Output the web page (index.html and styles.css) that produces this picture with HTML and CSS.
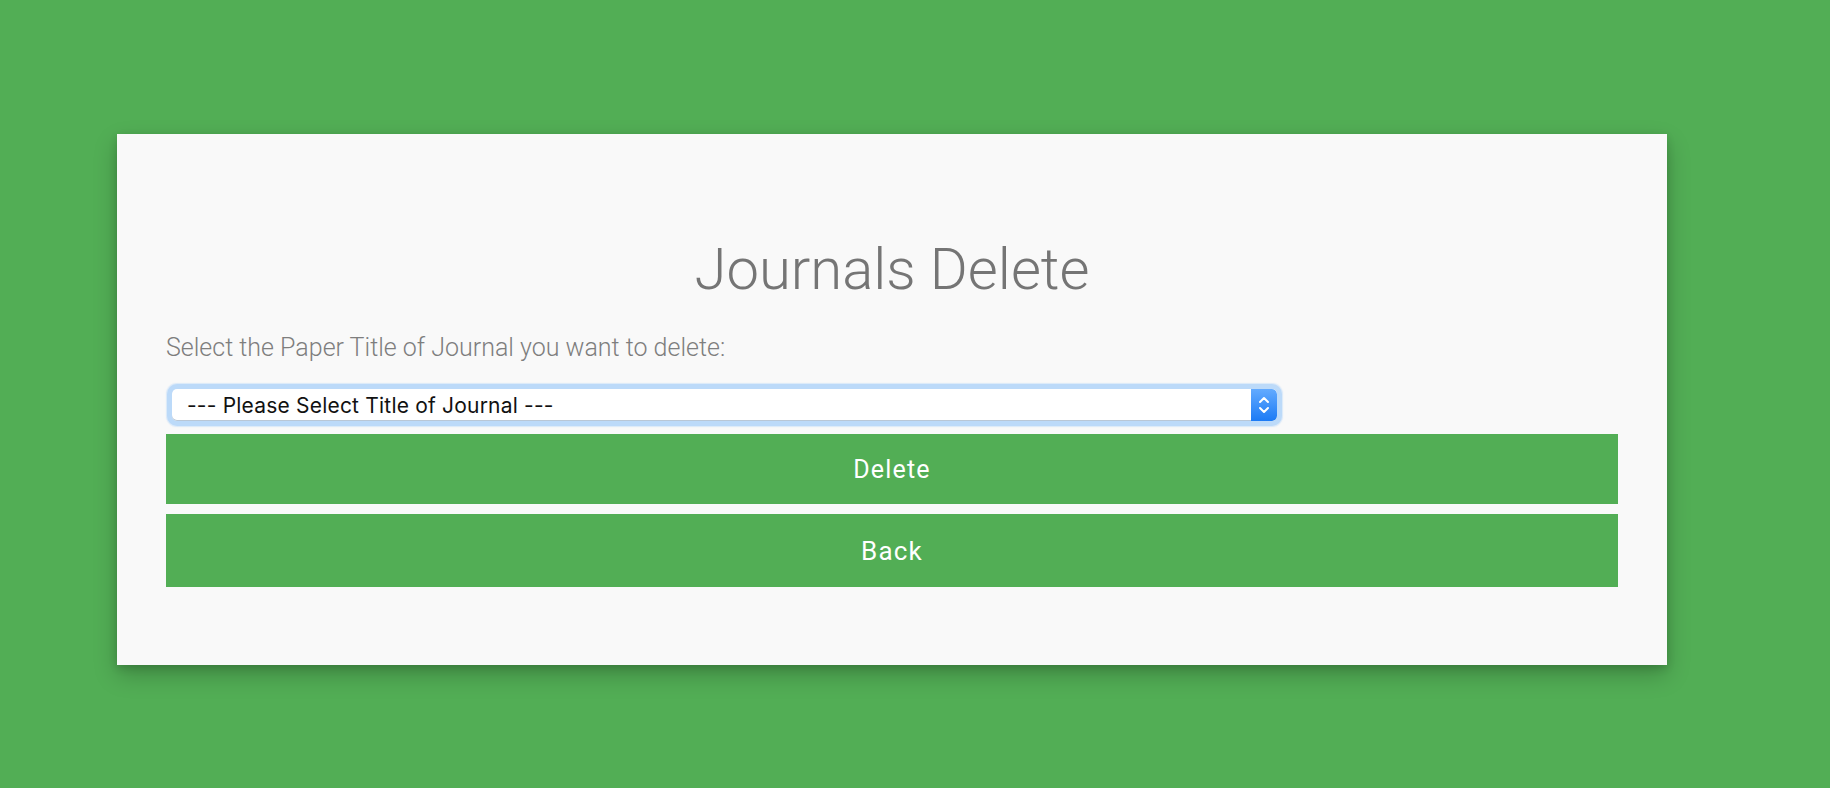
FILE: index.html
```html
<!DOCTYPE html>
<html lang="en">
<head>
<meta charset="utf-8">
<title>Journals Delete</title>
<link rel="stylesheet" href="styles.css">
</head>
<body>
<div class="page">
  <div class="card">
    <h1 class="title">Journals Delete</h1>
    <p class="label">Select the Paper Title of Journal you want to delete:</p>
    <div class="select">
      <span class="select-text">--- Please Select Title of Journal ---</span>
      <span class="select-arrows">
        <svg width="14" height="24" viewBox="0 0 14 24" fill="none" stroke="#fff" stroke-width="2" stroke-linecap="round" stroke-linejoin="round">
          <polyline points="3,9 7,5 11,9"/>
          <polyline points="3,15 7,19 11,15"/>
        </svg>
      </span>
    </div>
    <button class="btn btn-delete" type="button">Delete</button>
    <button class="btn btn-back" type="button">Back</button>
  </div>
</div>
</body>
</html>
```

FILE: styles.css
```css
html, body {
  margin: 0;
  padding: 0;
  height: 100%;
}
body {
  background: #52ae55;
  font-family: Roboto, "Liberation Sans", sans-serif;
}
.page {
  padding: 134px 0 0 117px;
}
.card {
  width: 1550px;
  box-sizing: border-box;
  background: #f9f9f9;
  padding: 100px 49px 78px 49px;
  box-shadow: 0 10px 22px rgba(0, 0, 0, 0.22), 0 3px 8px rgba(0, 0, 0, 0.14);
  display: flex;
  flex-direction: column;
}
.title {
  margin: 0;
  font-weight: 300;
  font-size: 58px;
  line-height: 70px;
  color: #757575;
  text-align: center;
}
.label {
  margin: 29px 0 0 0;
  font-weight: 300;
  font-size: 25px;
  line-height: 29px;
  color: #7e7e7e;
}
.select {
  margin: 27px 0 0 6px;
  width: 1105px;
  height: 32px;
  box-sizing: border-box;
  background: #fff;
  border-radius: 5px;
  box-shadow: 0 0 0 5px #bcdaf9, 0 0 1px 6px rgba(188, 218, 249, 0.5), inset 0 -1px 0 #b9c7d6;
  display: flex;
  align-items: center;
  justify-content: space-between;
  overflow: hidden;
}
.select-text {
  padding-left: 15px;
  font-family: Inter, "Liberation Sans", sans-serif;
  font-size: 21px;
  letter-spacing: 0.2px;
  color: #111;
}
.select-arrows {
  width: 26px;
  height: 32px;
  background: linear-gradient(#63abff, #1c7bf5);
  display: flex;
  align-items: center;
  justify-content: center;
  border-radius: 0 5px 5px 0;
}
.btn {
  border: 0;
  margin: 0;
  width: 100%;
  background: #52ae55;
  color: #fff;
  font-family: Roboto, "Liberation Sans", sans-serif;
  font-weight: 400;
  letter-spacing: 1.2px;
  padding: 0;
  cursor: pointer;
}
.btn-delete {
  margin-top: 13px;
  height: 70px;
  font-size: 25px;
}
.btn-back {
  margin-top: 10px;
  height: 73px;
  font-size: 26px;
}
```
